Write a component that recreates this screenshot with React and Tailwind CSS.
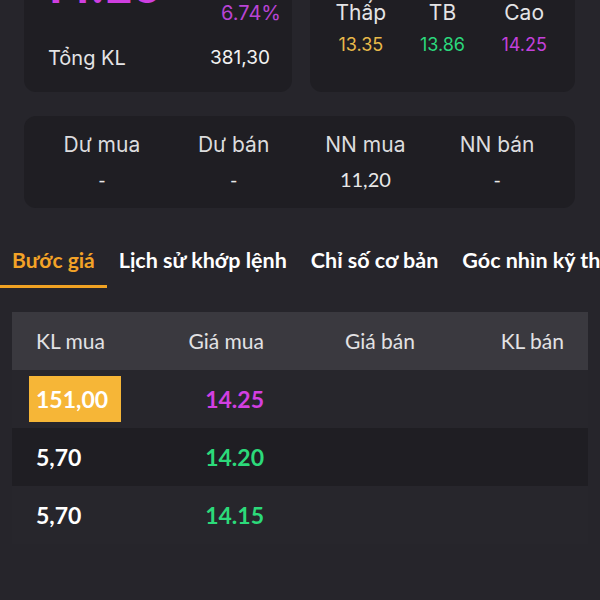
import React from 'react';

const inter = { fontFamily: 'Inter, "Noto Sans", sans-serif' };

const stats = [
  { label: 'Dư mua', value: '-' },
  { label: 'Dư bán', value: '-' },
  { label: 'NN mua', value: '11,20' },
  { label: 'NN bán', value: '-' },
];

const tabs = ['Bước giá', 'Lịch sử khớp lệnh', 'Chỉ số cơ bản', 'Góc nhìn kỹ thuật'];

const rows = [
  { kl: '151,00', price: '14.25', tone: 'text-[#d23fe2]', hot: true, bg: 'bg-[#27262c]' },
  { kl: '5,70', price: '14.20', tone: 'text-[#2cda7a]', hot: false, bg: 'bg-[#1f1e23]' },
  { kl: '5,70', price: '14.15', tone: 'text-[#2cda7a]', hot: false, bg: 'bg-[#27262c]' },
];

const App = () => {
  return (
    <div className="w-[600px] h-[600px] overflow-hidden bg-[#26252b] text-white" style={{ fontFamily: 'Lato, "Noto Sans", sans-serif' }}>
      {/* Price summary cards (top is scrolled out of view) */}
      <div className="-mt-[50px] flex gap-[18px] pl-6 pr-[25px]" style={inter}>
        <div className="w-[268px] rounded-xl bg-[#1f1e23] pt-[21px] pb-5">
          <div className="flex items-start justify-between pl-[19px] pr-[11px]">
            <div className="-mt-[8px] text-[44px] leading-[48px] font-bold text-[#cf3fe0]">14.25</div>
            <div className="mt-[28px] text-[20px] leading-[28px] text-[#b944d4]">6.74%</div>
          </div>
          <div className="mt-[17px] flex h-[28px] items-center justify-between pl-6 pr-[22px] text-[20px]">
            <span className="text-[#e4e4e6]">Tổng KL</span>
            <span className="text-[19px] text-[#f2f2f2]">381,30</span>
          </div>
        </div>
        <div className="flex-1 rounded-xl bg-[#1f1e23] pt-[49px] px-[10px]">
          <div className="grid grid-cols-3 text-center">
            <span className="h-[28px] text-[21px] leading-[28px] text-[#e4e4e6]">Thấp</span>
            <span className="h-[28px] text-[21px] leading-[28px] text-[#e4e4e6]">TB</span>
            <span className="h-[28px] text-[21px] leading-[28px] text-[#e4e4e6]">Cao</span>
            <span className="mt-[6px] text-[18px] leading-[24px] text-[#e8b94a]">13.35</span>
            <span className="mt-[6px] text-[18px] leading-[24px] text-[#2bd87c]">13.86</span>
            <span className="mt-[6px] text-[18px] leading-[24px] text-[#c341db]">14.25</span>
          </div>
        </div>
      </div>

      {/* Market depth summary */}
      <div className="mt-6 ml-6 mr-[25px] rounded-xl bg-[#1f1e23] px-3 pt-[15px] pb-[16px]">
        <div className="grid grid-cols-4 text-center">
          {stats.map((s) => (
            <span key={s.label} className="h-[28px] text-[21px] leading-[28px] text-[#dcdcde]" style={inter}>
              {s.label}
            </span>
          ))}
          {stats.map((s) => (
            <span key={s.label + 'v'} className="mt-[7px] h-[26px] text-[20px] leading-[26px] text-[#e8e8e8]">
              {s.value}
            </span>
          ))}
        </div>
      </div>

      {/* Tabs */}
      <div className="mt-6 flex whitespace-nowrap">
        {tabs.map((t, i) => (
          <div
            key={t}
            className={
              i === 0
                ? 'px-3 pt-[14px] pb-[11px] border-b-[3px] border-[#f0a223] text-[21px] leading-[28px] font-bold text-[#f3a327]'
                : 'px-3 pt-[14px] pb-[11px] border-b-[3px] border-transparent text-[21.5px] leading-[28px] font-bold text-white'
            }
          >
            {t}
          </div>
        ))}
      </div>

      {/* Order book */}
      <div className="mt-6 mx-3">
        <div className="grid h-[58px] grid-cols-4 items-center bg-[#3a393f] px-6 text-[21px] text-[#e2e2e4]">
          <span>KL mua</span>
          <span className="pr-9 text-right">Giá mua</span>
          <span className="pl-[45px]">Giá bán</span>
          <span className="text-right">KL bán</span>
        </div>
        {rows.map((r, i) => (
          <div key={i} className={`grid h-[58px] grid-cols-4 items-center px-6 text-[23px] font-bold ${r.bg}`}>
            <span>
              {r.hot ? (
                <span className="-ml-[7px] inline-flex h-[46px] w-[92px] items-center bg-[#f6b637] pl-[7px] text-white">{r.kl}</span>
              ) : (
                <span className="text-white">{r.kl}</span>
              )}
            </span>
            <span className={`pr-9 text-right ${r.tone}`}>{r.price}</span>
            <span />
            <span />
          </div>
        ))}
      </div>
    </div>
  );
};

export default App;
